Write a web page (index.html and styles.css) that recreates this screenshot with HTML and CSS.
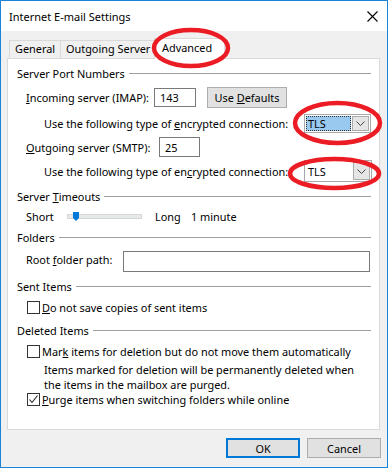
FILE: index.html
```html
<!DOCTYPE html>
<html>
<head>
<meta charset="utf-8">
<link rel="stylesheet" href="styles.css">
</head>
<body>
<div class="window">
  <div class="titlebar">
    <span class="title">Internet E-mail Settings</span>
    <svg class="close" width="11" height="11" viewBox="0 0 11 11"><path d="M0.5 0.5L10.5 10.5M10.5 0.5L0.5 10.5" stroke="#000" stroke-width="1.1" fill="none"/></svg>
  </div>
  <div class="client">
    <div class="tabs">
      <div class="tab t-general">General</div>
      <div class="tab t-outgoing">Outgoing Server</div>
      <div class="tab t-advanced active">Advanced</div>
    </div>
    <div class="panel">
      <div class="ghead m7"><span>Server Port Numbers</span><i class="rule"></i></div>
      <div class="row m6 h21">
        <span class="lbl w128"><u>I</u>ncoming server (IMAP):</span>
        <span class="input w42 h19">143</span>
        <span class="btn"><span>Use <u>D</u>efaults</span></span>
      </div>
      <div class="row m6 h19 ind2">
        <span class="lbl">Use the following type of <u>e</u>ncrypted connection:</span>
        <span class="combo focus h19">
          <span class="ctext"><span class="sel">TLS</span></span>
          <span class="carrow"><svg width="9" height="5" viewBox="0 0 9 5"><path d="M0.5 0.5L4.5 4.5L8.5 0.5" stroke="#444" fill="none"/></svg></span>
        </span>
      </div>
      <div class="row m4 h20">
        <span class="lbl w133"><u>O</u>utgoing server (SMTP):</span>
        <span class="input w41 h20">25</span>
      </div>
      <div class="row m3 h22 ind2">
        <span class="lbl">Use the following type of en<u>c</u>rypted connection:</span>
        <span class="combo h22 wide">
          <span class="ctext">TLS</span>
          <span class="carrow"><svg width="9" height="5" viewBox="0 0 9 5"><path d="M0.5 0.5L4.5 4.5L8.5 0.5" stroke="#444" fill="none"/></svg></span>
        </span>
      </div>
      <div class="ghead m7"><span>Server <u>T</u>imeouts</span><i class="rule"></i></div>
      <div class="row m4 h16">
        <span class="lbl w41">Short</span>
        <span class="slider">
          <svg class="thumb" width="6" height="9" viewBox="0 0 6 9"><path d="M0 0H6V6L3 9L0 6Z" fill="#0078d7"/></svg>
        </span>
        <span class="lbl long">Long</span>
        <span class="lbl">1 minute</span>
      </div>
      <div class="ghead m6"><span>Folders</span><i class="rule"></i></div>
      <div class="row m6 h21">
        <span class="lbl w97 up2">Root <u>f</u>older path:</span>
        <span class="input w247 h21"></span>
      </div>
      <div class="ghead m7"><span>Sent Items</span><i class="rule"></i></div>
      <div class="row m5 h16">
        <span class="check"></span>
        <span class="lbl"><u>D</u>o not save copies of sent items</span>
      </div>
      <div class="ghead m8"><span>Deleted Items</span><i class="rule"></i></div>
      <div class="row m5 h16">
        <span class="check"></span>
        <span class="lbl">Mar<u>k</u> items for deletion but do not move them automatically</span>
      </div>
      <p class="note">Items marked for deletion will be permanently deleted when<br>the items in the mailbox are purged.</p>
      <div class="row h16 purge">
        <span class="check"><svg width="11" height="11" viewBox="0 0 11 11"><path d="M1.5 5.5L4 8.5L9.5 1.5" stroke="#222" stroke-width="1.1" fill="none"/></svg></span>
        <span class="lbl"><u>P</u>urge items when switching folders while online</span>
      </div>
    </div>
    <div class="buttons">
      <span class="btn dlg default">OK</span>
      <span class="btn dlg">Cancel</span>
    </div>
  </div>
  <svg class="marks" width="388" height="468" viewBox="0 0 388 468">
    <ellipse cx="191" cy="48" rx="37" ry="18" fill="none" stroke="#ec1c24" stroke-width="4.5"/>
    <ellipse cx="337.5" cy="123" rx="42.5" ry="20" fill="none" stroke="#ec1c24" stroke-width="4.5"/>
    <ellipse cx="334.5" cy="173.5" rx="44.5" ry="14.5" fill="none" stroke="#ec1c24" stroke-width="4.5"/>
  </svg>
</div>
</body>
</html>
```

FILE: styles.css
```css
* { box-sizing: border-box; }
html, body { margin: 0; padding: 0; background: #fff; }
body {
  font-family: "Noto Sans", "Open Sans", sans-serif;
  font-size: 10.9px;
  color: #000;
}
.window {
  position: relative;
  width: 388px;
  height: 468px;
  border: 1px solid #1883d7;
  background: #f0f0f0;
  display: flex;
  flex-direction: column;
  overflow: hidden;
}
.titlebar {
  height: 30px;
  flex: none;
  background: #fff;
  display: flex;
  align-items: center;
  justify-content: space-between;
  padding: 0 9px 0 8px;
}
.title { font-size: 11px; }
.close { display: block; }
.client {
  flex: 1;
  padding: 7px 7px 0 6px;
  display: flex;
  flex-direction: column;
}
.tabs {
  display: flex;
  align-items: flex-end;
  height: 20px;
  padding-left: 2px;
}
.tab {
  height: 18px;
  border: 1px solid #d9d9d9;
  border-bottom: none;
  background: #f0f0f0;
  line-height: 16px;
  padding-left: 5px;
  white-space: nowrap;
  overflow: hidden;
}
.tab + .tab { margin-left: -1px; }
.t-general { width: 52px; }
.t-outgoing { width: 96px; }
.t-advanced { width: 71px; }
.tab.active {
  height: 21px;
  margin: 0 -2px -1px -2px;
  background: #fff;
  position: relative;
  z-index: 1;
  padding-left: 7px;
  line-height: 18px;
}
.panel {
  width: 373px;
  height: 372px;
  background: #fff;
  border: 1px solid #d9d9d9;
  padding: 0 8px 0 9px;
  display: flex;
  flex-direction: column;
}
.ghead {
  height: 15px;
  display: flex;
  align-items: center;
  gap: 4px;
  line-height: 15px;
  white-space: nowrap;
}
.rule { flex: 1; height: 1px; background: #a0a0a0; }
.m3 { margin-top: 3px; }
.m4 { margin-top: 4px; }
.m5 { margin-top: 5px; }
.m6 { margin-top: 6px; }
.m7 { margin-top: 7px; }
.m8 { margin-top: 8px; }
.row {
  display: flex;
  align-items: center;
  padding-left: 9px;
  white-space: nowrap;
}
.row.ind2 { padding-left: 27px; padding-right: 0; }
.row.purge { margin-top: -1px; }
.h16 { height: 16px; }
.h19 { height: 19px; }
.h20 { height: 20px; }
.h21 { height: 21px; }
.h22 { height: 22px; }
.lbl { line-height: 15px; }
.w128 { width: 128px; }
.w133 { width: 133px; }
.w97 { width: 97px; }
.w41 { width: 41px; }
.w42 { width: 42px; }
.w247 { width: 247px; }
.up2 { position: relative; top: -2px; }
.input {
  display: flex;
  align-items: center;
  border: 1px solid #7a7a7a;
  background: #fff;
  padding-left: 5px;
  line-height: 15px;
}
.btn {
  display: inline-flex;
  align-items: center;
  justify-content: center;
  height: 21px;
  width: 80px;
  margin-left: 11px;
  background: #e1e1e1;
  border: 1px solid #adadad;
  white-space: nowrap;
}
.combo {
  margin-left: auto;
  width: 67px;
  display: flex;
  border: 1px solid #a9a9a9;
  background: #fff;
  padding: 1px;
}
.combo.wide { width: 68px; margin-right: -1px; }
.ctext {
  flex: 1;
  display: flex;
  align-items: center;
  padding-left: 2px;
}
.combo.focus .ctext {
  background: #99c9ef;
  outline: 1px dotted #333;
  outline-offset: -1px;
  margin-right: 1px;
}
.sel { padding-left: 0; }
.carrow {
  width: 17px;
  display: flex;
  align-items: center;
  justify-content: center;
  background: #e5e5e5;
  border: 1px solid #acacac;
}
.slider {
  position: relative;
  width: 75px;
  height: 5px;
  background: #e7eaea;
  border: 1px solid #d6d6d6;
}
.thumb { position: absolute; left: 5px; top: -3px; }
.long { margin-left: 13px; width: 36px; }
.check {
  width: 13px;
  height: 13px;
  border: 1px solid #333;
  background: #fff;
  margin: 0 2px 0 1px;
  display: flex;
  align-items: center;
  justify-content: center;
}
.check svg { display: block; }
.note {
  margin: 3px 0 0 27px;
  line-height: 15px;
}
.buttons {
  display: flex;
  justify-content: flex-end;
  gap: 7px;
  margin: 8px -1px 0 0;
}
.btn.dlg {
  margin-left: 0;
  width: 74px;
  height: 20px;
}
.btn.default { border: 2px solid #0078d7; }
.marks {
  position: absolute;
  left: -1px;
  top: -1px;
  pointer-events: none;
  z-index: 5;
}
```
